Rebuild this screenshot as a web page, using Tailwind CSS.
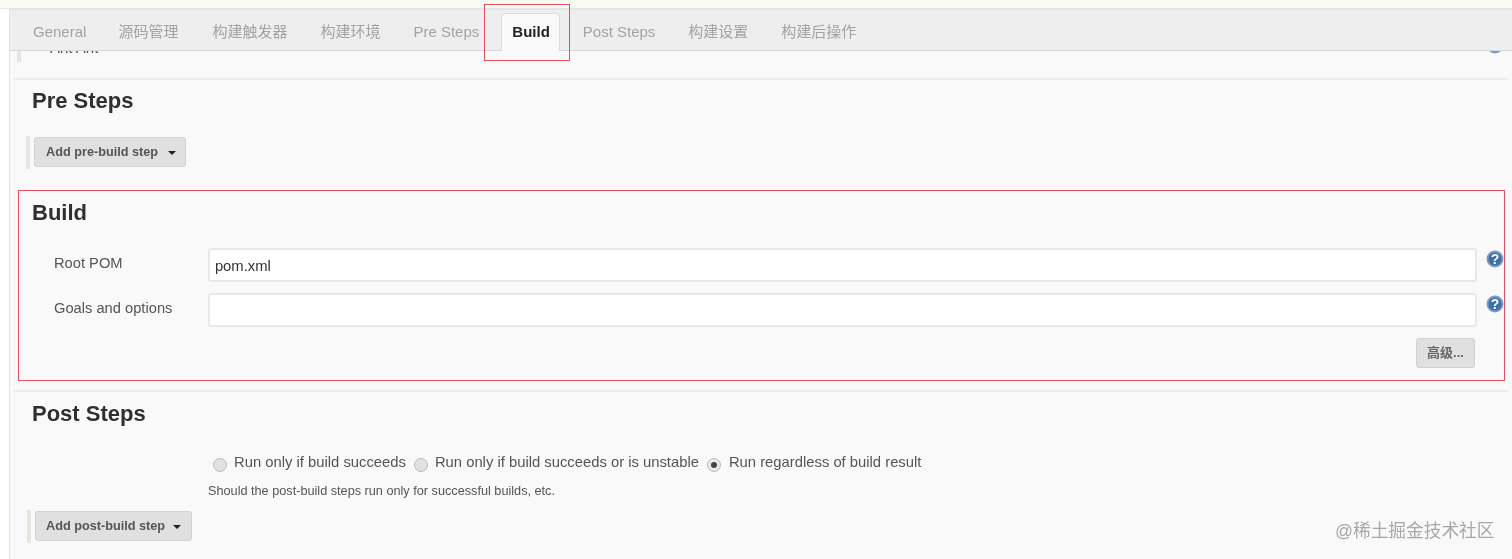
<!DOCTYPE html>
<html lang="en">
<head>
  <meta charset="UTF-8" />
  <title>Maven project config</title>
  <script src="https://cdn.jsdelivr.net/npm/@tailwindcss/browser@4"></script>
</head>
<body class="relative w-[1512px] h-[559px] overflow-hidden bg-white text-[#333] blur-[0.35px] font-['Liberation_Sans','Noto_Sans_CJK_SC',sans-serif]">

  <!-- top strip -->
  <div class="h-[9px] bg-[#f8faf4] border-b border-[#e6e6e6]"></div>

  <div class="ml-[9px] h-[550px] bg-[#f9f9f9] border-l border-[#e4e4e4]">

    <!-- tabs -->
    <nav class="h-[42px] flex items-end gap-[11px] pl-[12px] bg-[#eeeeee] border-t border-[#e4e4e4] border-b border-b-[#d8d8d8] text-[15px] text-[#a3a3a3]">
      <a class="h-[36px] pl-[11px] pr-[10px] leading-[36px] whitespace-nowrap">General</a>
      <a class="h-[36px] pl-[11px] pr-[12px] leading-[36px] whitespace-nowrap">源码管理</a>
      <a class="h-[36px] px-[11px] leading-[36px] whitespace-nowrap">构建触发器</a>
      <a class="h-[36px] px-[11px] leading-[36px] whitespace-nowrap">构建环境</a>
      <a class="h-[36px] px-[11px] leading-[36px] whitespace-nowrap">Pre Steps</a>
      <a class="h-[38px] -mb-px pl-[10px] pr-[9px] leading-[36px] font-bold text-[#222] bg-[#f9f9f9] border border-[#dcdcdc] border-b-0 rounded-t-[4px] whitespace-nowrap">Build</a>
      <a class="h-[36px] pl-[12px] pr-[11px] leading-[36px] whitespace-nowrap">Post Steps</a>
      <a class="h-[36px] px-[11px] leading-[36px] whitespace-nowrap">构建设置</a>
      <a class="h-[36px] px-[11px] leading-[36px] whitespace-nowrap">构建后操作</a>
    </nav>

    <!-- previous section, scrolled under the tabs -->
    <div class="relative h-[27px] overflow-hidden">
      <div class="ml-[7px] w-[4px] h-[11px] bg-[#e4e4e0]"></div>
      <span class="absolute left-[40px] top-[-12px] text-[15px] leading-[17px] text-[#555]">Ant Ant</span>
      <svg class="absolute right-[8px] top-[-15px] w-[18px] h-[18px]" viewBox="0 0 18 18"><circle cx="9" cy="9" r="8.5" fill="#7d9cc4" /><circle cx="9" cy="9" r="6" fill="#3d6fa8" /></svg>
    </div>
    <div class="mx-[4px] h-[2px] bg-[#ececec]"></div>

    <!-- Pre Steps -->
    <section class="pl-[22px] pt-[10px]">
      <h2 class="text-[22px] leading-[22px] font-bold text-[#2f2f2f]">Pre Steps</h2>
    </section>
    <div class="mt-[24px] ml-[16px] w-fit border-l-[4px] border-[#e6e6e0] pl-[4px] py-[1px] h-[33px]">
      <button class="h-[30px] w-[152px] flex items-center pl-[11px] pt-px gap-[10px] bg-[#e0e0e0] border border-[#d2d2d2] rounded-[3px] text-[12.7px] font-bold text-[#555] whitespace-nowrap">
        Add pre-build step
        <span class="w-0 h-0 border-x-[4px] border-x-transparent border-t-[4px] border-t-[#222]"></span>
      </button>
    </div>

    <!-- Build -->
    <section class="mt-[21px] ml-[8px] w-[1487px] h-[191px] border border-[#e2505e] pl-[13px] pt-[11px]">
      <h2 class="text-[22px] leading-[22px] font-bold text-[#2f2f2f]">Build</h2>
      <div class="mt-[24px] flex flex-col gap-[11px]">
        <div class="flex">
          <label class="ml-[22px] w-[154px] pt-[7px] text-[14.7px] leading-[17px] text-[#555]">Root POM</label>
          <input value="pom.xml" class="w-[1270px] h-[34px] px-[5px] pt-[1px] bg-white border-2 border-[#e8e8e8] rounded-[3px] text-[14.8px] text-[#333]" />
          <svg class="ml-[9px] mt-[2px] w-[18px] h-[18px]" viewBox="0 0 18 18"><circle cx="9" cy="9" r="8.5" fill="#7d9cc4" /><circle cx="9" cy="9" r="6.6" fill="#3d6fa8" /><text x="9" y="14" text-anchor="middle" font-size="14" font-weight="700" fill="#fff">?</text></svg>
        </div>
        <div class="flex">
          <label class="ml-[22px] w-[154px] pt-[7px] text-[14.7px] leading-[17px] text-[#555]">Goals and options</label>
          <input class="w-[1270px] h-[34px] px-[5px] bg-white border-2 border-[#e8e8e8] rounded-[3px]" />
          <svg class="ml-[9px] mt-[2px] w-[18px] h-[18px]" viewBox="0 0 18 18"><circle cx="9" cy="9" r="8.5" fill="#7d9cc4" /><circle cx="9" cy="9" r="6.6" fill="#3d6fa8" /><text x="9" y="14" text-anchor="middle" font-size="14" font-weight="700" fill="#fff">?</text></svg>
        </div>
        <div class="flex justify-end pr-[29px]">
          <button class="w-[59px] h-[30px] bg-[#e0e0e0] border border-[#d2d2d2] rounded-[3px] text-[13px] font-bold text-[#666] whitespace-nowrap">高级...</button>
        </div>
      </div>
    </section>

    <div class="mt-[9px] mx-[4px] h-[2px] bg-[#ececec]"></div>

    <!-- Post Steps -->
    <section class="pl-[22px] pt-[11px]">
      <h2 class="text-[22px] leading-[22px] font-bold text-[#2f2f2f]">Post Steps</h2>
    </section>
    <div class="mt-[27px] ml-[203px] flex items-center h-[20px] text-[14.8px] text-[#555] whitespace-nowrap">
      <span class="mt-[6px] w-[14px] h-[14px] rounded-full bg-[#e2e2e2] border border-[#bdbdbd]"></span>
      <span class="ml-[7px]">Run only if build succeeds</span>
      <span class="ml-[8px] mt-[6px] w-[14px] h-[14px] rounded-full bg-[#e2e2e2] border border-[#bdbdbd]"></span>
      <span class="ml-[7px]">Run only if build succeeds or is unstable</span>
      <span class="ml-[8px] mt-[6px] w-[14px] h-[14px] rounded-full bg-[#e8e8e8] border border-[#bdbdbd] flex items-center justify-center"><span class="w-[6px] h-[6px] rounded-full bg-[#444]"></span></span>
      <span class="ml-[8px]">Run regardless of build result</span>
    </div>
    <p class="mt-[12px] ml-[198px] text-[12.7px] leading-[14px] text-[#555]">Should the post-build steps run only for successful builds, etc.</p>
    <div class="mt-[12px] ml-[17px] w-fit border-l-[4px] border-[#e6e6e0] pl-[4px] py-[1px] h-[33px]">
      <button class="h-[30px] w-[157px] flex items-center pl-[10px] pt-px gap-[8px] bg-[#e0e0e0] border border-[#d2d2d2] rounded-[3px] text-[12.7px] font-bold text-[#555] whitespace-nowrap">
        Add post-build step
        <span class="w-0 h-0 border-x-[4px] border-x-transparent border-t-[4px] border-t-[#222]"></span>
      </button>
    </div>
  </div>

  <!-- annotation around the Build tab -->
  <div class="absolute left-[484px] top-[4px] w-[86px] h-[57px] border border-[#e2505e]"></div>

  <!-- watermark -->
  <div class="absolute left-[1335px] top-[520px] text-[17.7px] leading-[22px] text-[#a8a8a8] whitespace-nowrap">@稀土掘金技术社区</div>
</body>
</html>
